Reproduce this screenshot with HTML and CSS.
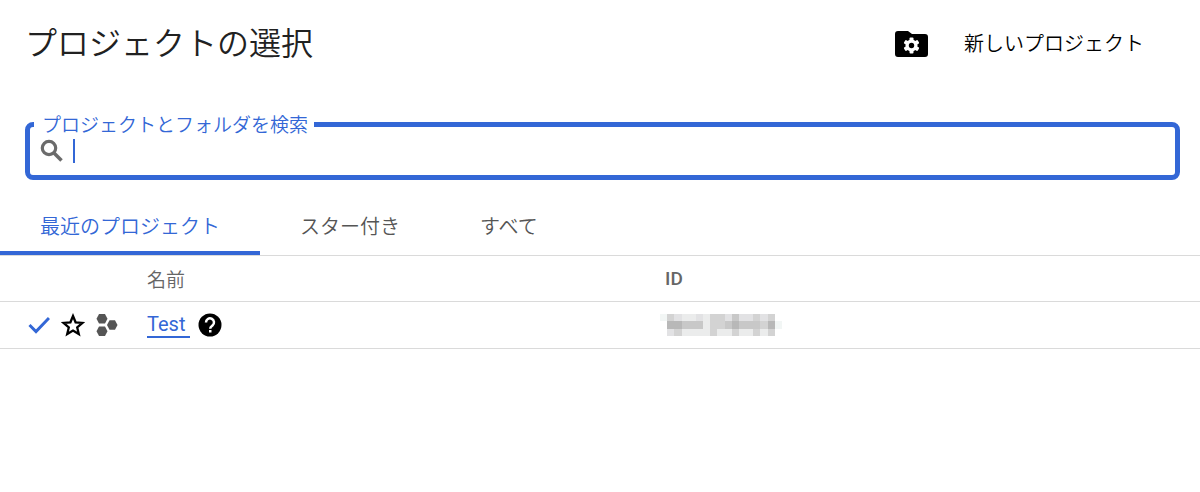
FILE: index.html
```html
<!DOCTYPE html>
<html lang="ja">
<head>
  <meta charset="UTF-8">
  <title>プロジェクトの選択</title>
  <link rel="stylesheet" href="styles.css">
</head>
<body>
  <header class="header">
    <h1>プロジェクトの選択</h1>
    <button type="button" class="new-project">
      <svg class="folder-icon" width="33" height="26" viewBox="0 0 33 26" aria-hidden="true">
        <path d="M3 0h10l4 3h13a3 3 0 0 1 3 3v17a3 3 0 0 1-3 3H3a3 3 0 0 1-3-3V3a3 3 0 0 1 3-3z"/>
        <g transform="translate(16.5 14.5)" fill="#fff">
          <circle r="6"/>
          <rect x="-2" y="-8" width="4" height="16" rx="1"/>
          <rect x="-2" y="-8" width="4" height="16" rx="1" transform="rotate(60)"/>
          <rect x="-2" y="-8" width="4" height="16" rx="1" transform="rotate(120)"/>
          <circle r="2.7" fill="#000"/>
        </g>
      </svg>
      <span>新しいプロジェクト</span>
    </button>
  </header>

  <fieldset class="search">
    <legend><label for="search">プロジェクトとフォルダを検索</label></legend>
    <div class="search-row">
      <svg width="24" height="24" viewBox="0 0 24 24" aria-hidden="true">
        <circle cx="9" cy="9" r="6.7" fill="none" stroke="#6b6b6b" stroke-width="3.2"/>
        <path d="M13.500 13.500l8 8" stroke="#6b6b6b" stroke-width="3.500"/>
      </svg>
      <span class="caret"></span>
      <input type="text" id="search">
    </div>
  </fieldset>

  <nav class="tabs">
    <a href="#recent" class="tab active">最近のプロジェクト</a>
    <a href="#starred" class="tab">スター付き</a>
    <a href="#all" class="tab">すべて</a>
  </nav>

  <table class="projects">
    <thead>
      <tr>
        <th class="col-icons"></th>
        <th class="col-name">名前</th>
        <th>ID</th>
      </tr>
    </thead>
    <tbody>
      <tr>
        <td>
          <div class="icons">
            <svg width="22" height="24" viewBox="0 0 22 24" aria-hidden="true">
              <path d="M1.500 12l6.500 6.500L21 5" fill="none" stroke="#3367d6" stroke-width="3"/>
            </svg>
            <button type="button" class="star" aria-label="スターを付ける">
              <svg width="24" height="24" viewBox="0 0 24 24">
                <path d="M12 3l2.600 6.300 6.800.6-5.200 4.500 1.600 6.700-5.800-3.600-5.800 3.600 1.600-6.700-5.200-4.500 6.800-.6z" fill="none" stroke="#000" stroke-width="2.300"/>
              </svg>
            </button>
            <svg width="22" height="24" viewBox="0 0 22 24" fill="#555" aria-hidden="true">
              <path d="M3 1h6l2.500 4.700L9 10.500H3L.5 5.700z"/>
              <path d="M3 13.500h6l2.500 4.700L9 23H3L.5 18.200z"/>
              <path d="M13.500 7.300h5.500l2.500 4.700-2.500 4.700h-5.500L11 12z"/>
            </svg>
          </div>
        </td>
        <td>
          <div class="name">
            <a href="#test">Test</a>
            <svg width="24" height="24" viewBox="0 0 24 24" role="img" aria-label="ヘルプ">
              <circle cx="12" cy="12" r="11.500"/>
              <path d="M8 9.500a4 4 0 1 1 6.500 3c-1.500 1.200-2.300 1.700-2.300 3.200" fill="none" stroke="#fff" stroke-width="2.500"/>
              <rect x="11" y="17" width="2.500" height="2.500" fill="#fff"/>
            </svg>
          </div>
        </td>
        <td>
          <!-- masked project id -->
          <svg class="masked" width="122" height="22" viewBox="0 0 17 3" preserveAspectRatio="none" role="img" aria-label="ID" shape-rendering="crispEdges">
            <path fill="#e2e2e4" d="M1 0h15v3H1z"/>
            <path fill="#f2f6f5" d="M0 0h1v1H0zM16 1h1v1h-1z"/>
            <path fill="#ebecec" d="M3 0h2v1H3zM6 0h1v1H6zM3 2h4v1H3zM6 1h1v1H6zM8 2h2v1H8zM11 2h2v1h-2zM14 2h1v1h-1z"/>
            <path fill="#d3d3d3" d="M1 0h1v1H1zM7 0h2v1H7zM13 0h1v1h-1zM15 0h1v1h-1zM7 1h1v2H7zM2 2h1v1H2zM10 2h1v1h-1zM13 2h1v1h-1zM15 2h1v1h-1zM14 1h1v1h-1zM8 1h1v1H8z"/>
            <path fill="#c8c8c8" d="M3 1h3v1H3zM10 0h1v1h-1zM9 1h1v1H9zM11 1h3v1h-3z"/>
            <path fill="#b8b8b8" d="M1 1h2v1H1zM10 1h1v1h-1zM15 1h1v1h-1z"/>
          </svg>
        </td>
      </tr>
    </tbody>
  </table>
</body>
</html>
```
FILE: styles.css
```css
* {
  box-sizing: border-box;
}
body {
  margin: 0;
  background: #fff;
  color: #212121;
  font-family: Roboto, "Noto Sans CJK JP", sans-serif;
  font-size: 20px;
}
button {
  padding: 0;
  border: 0;
  background: none;
  color: #000;
  font: inherit;
}
svg {
  display: block;
  flex: none;
}
.header {
  display: flex;
  align-items: center;
  justify-content: space-between;
  padding: 20px 56px 0 25px;
}
h1 {
  margin: 0;
  font-size: 32px;
  font-weight: 350;
  line-height: 48px;
}
.new-project {
  display: flex;
  align-items: center;
  gap: 36px;
  font-weight: 350;
  line-height: 28px;
}
.search {
  margin: 40px 20px 0 25px;
  padding: 0 10px 6px;
  border: 5px solid #3367d6;
  border-radius: 8px;
}
.search legend {
  margin-left: -6px;
  padding: 4px 6px 0 8px;
  color: #3367d6;
  font-size: 19px;
  font-weight: 350;
  line-height: 28px;
}
.search-row {
  display: flex;
  align-items: center;
  height: 36px;
  margin-top: -7px;
}
.caret {
  width: 2px;
  height: 24px;
  margin-left: 9px;
  background: #3367d6;
}
.search input {
  flex: 1;
  border: 0;
  outline: 0;
  background: none;
  font: inherit;
}
.tabs {
  display: flex;
  border-bottom: 1px solid #dadada;
  margin-top: 15px;
}
.tab {
  padding: 8px 40px 0;
  border-bottom: 4px solid transparent;
  color: #555;
  font-weight: 350;
  line-height: 48px;
  text-decoration: none;
}
.tab.active {
  border-color: #3367d6;
  color: #3367d6;
}
.projects {
  width: 100%;
  border-collapse: collapse;
  table-layout: fixed;
}
.projects th,
.projects td {
  padding: 0;
  border-bottom: 1px solid #dadada;
  text-align: left;
}
.projects th {
  height: 45px;
  color: #666;
  font-size: 19px;
  font-weight: 500;
}
.projects td {
  height: 47px;
}
.projects .col-icons {
  width: 147px;
}
.projects .col-name {
  width: 518px;
  font-weight: 350;
}
.icons {
  display: flex;
  align-items: center;
  gap: 11px;
  padding-left: 28px;
}
.name {
  display: flex;
  align-items: center;
  gap: 8px;
}
.name a {
  padding-right: 5px;
  border-bottom: 2px solid #3367d6;
  color: #3367d6;
  line-height: 24px;
  text-decoration: none;
}
.masked {
  margin-left: -5px;
}
```
